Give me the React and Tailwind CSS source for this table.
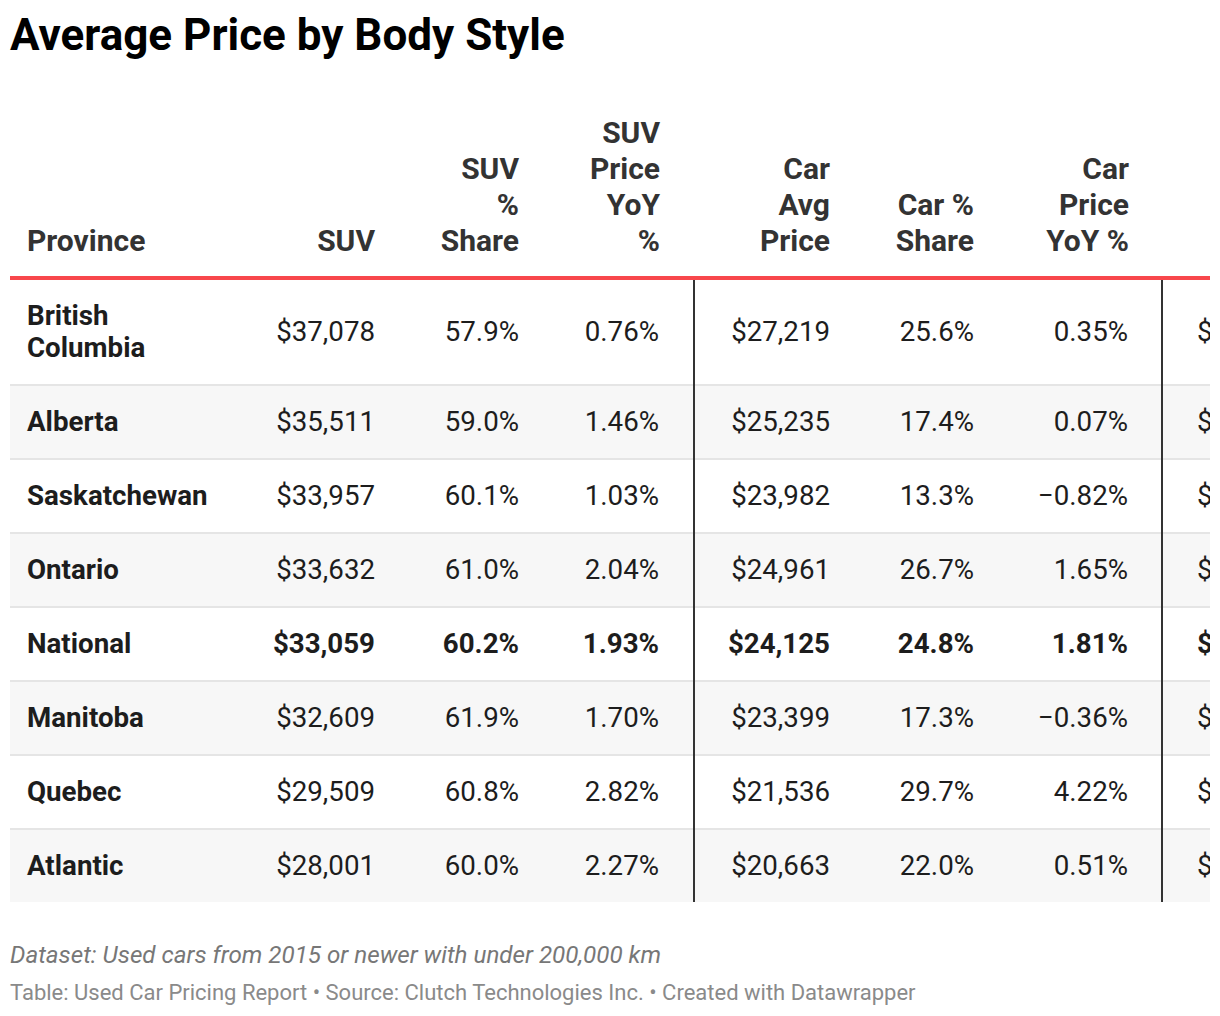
import React from "react";
import clsx from "clsx";

const ROWS = [
  { name: "British Columbia", suv: "$37,078", suvShare: "57.9%", suvYoy: "0.76%", car: "$27,219", carShare: "25.6%", carYoy: "0.35%", truck: "$48,913" },
  { name: "Alberta", suv: "$35,511", suvShare: "59.0%", suvYoy: "1.46%", car: "$25,235", carShare: "17.4%", carYoy: "0.07%", truck: "$46,270" },
  { name: "Saskatchewan", suv: "$33,957", suvShare: "60.1%", suvYoy: "1.03%", car: "$23,982", carShare: "13.3%", carYoy: "−0.82%", truck: "$44,118" },
  { name: "Ontario", suv: "$33,632", suvShare: "61.0%", suvYoy: "2.04%", car: "$24,961", carShare: "26.7%", carYoy: "1.65%", truck: "$45,402" },
  { name: "National", suv: "$33,059", suvShare: "60.2%", suvYoy: "1.93%", car: "$24,125", carShare: "24.8%", carYoy: "1.81%", truck: "$45,187", bold: true },
  { name: "Manitoba", suv: "$32,609", suvShare: "61.9%", suvYoy: "1.70%", car: "$23,399", carShare: "17.3%", carYoy: "−0.36%", truck: "$43,560" },
  { name: "Quebec", suv: "$29,509", suvShare: "60.8%", suvYoy: "2.82%", car: "$21,536", carShare: "29.7%", carYoy: "4.22%", truck: "$42,034" },
  { name: "Atlantic", suv: "$28,001", suvShare: "60.0%", suvYoy: "2.27%", car: "$20,663", carShare: "22.0%", carYoy: "0.51%", truck: "$40,871" },
];

export default function App() {
  return (
    <div
      className="w-[1220px] min-h-[1016px] bg-white px-[10px] pt-[12px] text-[#1d1d1d]"
      style={{ fontFamily: "Roboto, 'Liberation Sans', sans-serif" }}
    >
      {/* Title */}
      <h1 className="text-[44px] leading-[46px] font-bold text-black">
        Average Price by Body Style
      </h1>

      {/* Table */}
      <div className="w-[1200px] overflow-hidden mt-[57px]">
        <table className="table-fixed border-collapse w-[1320px]">
          <colgroup>
            <col className="w-[212px]" />
            <col className="w-[170px]" />
            <col className="w-[144px]" />
            <col className="w-[158px]" />
            <col className="w-[153px]" />
            <col className="w-[144px]" />
            <col className="w-[171px]" />
            <col className="w-[168px]" />
          </colgroup>
          <thead>
            <tr className="text-[30px] leading-[36px] font-bold text-[#333] border-b-[4px] border-[#f8474c]">
              <th className="text-left align-bottom pl-[17px] pr-[8px] pb-[17px] font-bold">Province</th>
              <th className="text-right align-bottom pr-[17px] pb-[17px] font-bold">SUV</th>
              <th className="text-right align-bottom pr-[17px] pb-[17px] font-bold">SUV<br />%<br />Share</th>
              <th className="text-right align-bottom pr-[34px] pb-[17px] font-bold">SUV<br />Price<br />YoY<br />%</th>
              <th className="text-right align-bottom pr-[17px] pb-[17px] font-bold">Car<br />Avg<br />Price</th>
              <th className="text-right align-bottom pr-[17px] pb-[17px] font-bold">Car %<br />Share</th>
              <th className="text-right align-bottom pr-[33px] pb-[17px] font-bold">Car<br />Price<br />YoY %</th>
              <th className="pb-[17px]" />
            </tr>
          </thead>
          <tbody>
            {ROWS.map((r, i) => (
              <tr
                key={r.name}
                className={clsx(
                  "text-[27.7px] leading-[32px]",
                  i % 2 === 1 ? "bg-[#f7f7f7]" : "bg-white",
                  i < ROWS.length - 1 && "border-b-[2px] border-[#e5e5e5]",
                  r.bold && "font-bold"
                )}
              >
                <td className="text-left font-bold pl-[17px] pr-[8px] py-[20px]">{r.name}</td>
                <td className="text-right pr-[17px] py-[20px]">{r.suv}</td>
                <td className="text-right pr-[17px] py-[20px]">{r.suvShare}</td>
                <td className="text-right pr-[34px] py-[20px]">{r.suvYoy}</td>
                <td className="text-right pr-[17px] py-[20px] border-l-[2px] border-l-[#333]">{r.car}</td>
                <td className="text-right pr-[17px] py-[20px]">{r.carShare}</td>
                <td className="text-right pr-[33px] py-[20px]">{r.carYoy}</td>
                <td className="text-left pl-[34px] py-[20px] border-l-[2px] border-l-[#333] whitespace-nowrap">{r.truck}</td>
              </tr>
            ))}
          </tbody>
        </table>
      </div>

      {/* Notes */}
      <div className="mt-[38px] text-[24.2px] leading-[30px] italic text-[#777]">
        Dataset: Used cars from 2015 or newer with under 200,000 km
      </div>
      <div className="mt-[8px] text-[22px] leading-[30px] text-[#8a8a8a]">
        Table: Used Car Pricing Report • Source: Clutch Technologies Inc. • Created with Datawrapper
      </div>
    </div>
  );
}
